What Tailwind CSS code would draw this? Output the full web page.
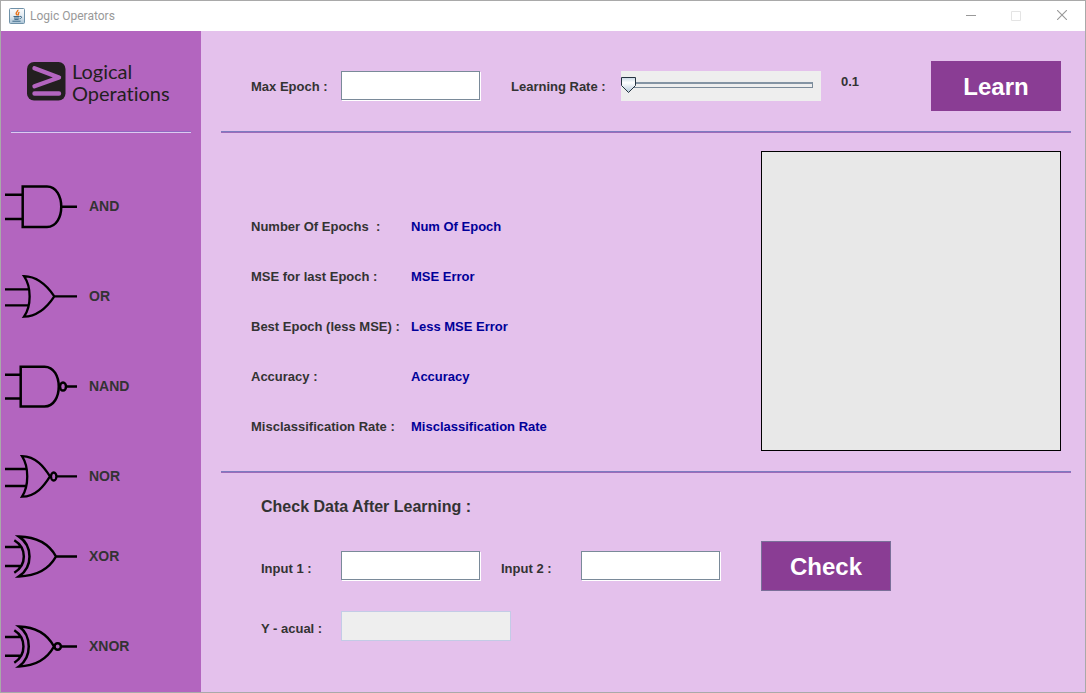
<!DOCTYPE html>
<html lang="en">
<head>
<meta charset="utf-8">
<meta name="viewport" content="width=device-width, initial-scale=1">
<title>Logic Operators</title>
<script src="https://cdn.jsdelivr.net/npm/@tailwindcss/browser@4"></script>
<style>
  .rate::-webkit-slider-thumb {
    appearance: none;
    width: 15px;
    height: 16px;
    background: url("data:image/svg+xml,%3Csvg xmlns='http://www.w3.org/2000/svg' width='15' height='16'%3E%3ClinearGradient id='g' x2='0' y2='1'%3E%3Cstop stop-color='%23c8d8e6'/%3E%3Cstop offset='.35' stop-color='%23fff'/%3E%3Cstop offset='1' stop-color='%23b4c8da'/%3E%3C/linearGradient%3E%3Cpath d='M.5 .5h14v8l-7 7-7-7z' fill='url(%23g)' stroke='%23263440'/%3E%3C/svg%3E");
  }
</style>
</head>
<body>
<div class="min-h-screen flex flex-col border border-[#a9a9a9] bg-[#e4c1ec] font-['Liberation_Sans',Arial,sans-serif] text-[13px] font-bold text-[#333333]">
  <header class="h-[30px] bg-white flex items-center pl-2">
    <svg class="w-4 h-4" viewBox="0 0 16 16" aria-hidden="true">
      <defs><linearGradient id="tile" x2="0" y2="1"><stop stop-color="#fbfcfd"/><stop offset=".5" stop-color="#e3ebf1"/><stop offset="1" stop-color="#a9c3d6"/></linearGradient></defs>
      <rect x=".5" y=".5" width="15" height="15" rx="1" fill="url(#tile)" stroke="#6f91a8"/>
      <path d="M8.800 1.800c.8 1.600-2.700 2.400-1.500 4.200.4.600.9.900.9 1.500M10.400 4.200C8.600 5 9.900 6 9.200 7.300" fill="none" stroke="#e8731c" stroke-width="1.400"/>
      <path d="M4.500 8.500h6.200M5 10h5.200M5.400 11.400h4.200M3.400 13.200h8.200" fill="none" stroke="#3c6787" stroke-width="1"/>
      <path d="M11 8.400c2.400-.4 2 2-.4 2.400" fill="none" stroke="#3c6787"/>
    </svg>
    <h1 class="ml-[5px] font-['Roboto','Open_Sans',sans-serif] font-normal text-xs text-[#999999]">Logic Operators</h1>
    <div class="ml-auto flex text-[#999999]">
      <button type="button" aria-label="Minimize" class="w-11 h-[30px] flex items-center justify-center"><svg class="w-2.5 h-2.5" viewBox="0 0 10 10"><path d="M0 4.500h10" stroke="currentColor"/></svg></button>
      <button type="button" aria-label="Maximize" disabled class="w-[46px] h-[30px] flex items-center justify-center text-[#e4e4e4]"><svg class="w-2.5 h-2.5" viewBox="0 0 10 10"><path d="M.5 .5h9v9h-9z" fill="none" stroke="currentColor"/></svg></button>
      <button type="button" aria-label="Close" class="w-[46px] h-[30px] pb-0.5 flex items-center justify-center"><svg class="w-2.5 h-2.5" viewBox="0 0 10 10"><path d="M0 0l10 10M10 0L0 10" stroke="currentColor" stroke-width="1.100"/></svg></button>
    </div>
  </header>

  <div class="flex flex-1">
    <aside class="w-[200px] shrink-0 bg-[#b365bf]">
      <div class="mx-2.5 h-[102px] pl-4 flex items-center gap-1.5 border-b border-[#dccbf0] shadow-[inset_0_-1px_0_#9068c2] font-['Lato',sans-serif] font-normal text-xl leading-[22px] text-[#231f20] [font-variant-ligatures:none]">
        <svg class="w-[39px] h-[39px] shrink-0" viewBox="0 0 39 39" aria-hidden="true">
          <rect width="38.500" height="38.500" rx="7" fill="#231f20"/>
          <path d="M7.500 6.200L32 15.500 7.500 24.300M7.500 31.500H32" fill="none" stroke="#b365bf" stroke-width="4.400" stroke-linecap="round" stroke-linejoin="round"/>
        </svg>
        <p>Logical<br>Operations</p>
      </div>
      <nav class="pt-[33px] pb-1 text-sm" aria-label="Gates">
        <button type="button" class="w-full h-20 mb-2.5 pl-1 flex items-center gap-3">
          <svg class="w-[72px] h-[46px]" viewBox="0 0 72 46" fill="none" stroke="#000" stroke-width="2.500"><path d="M17.700 3.500H42C61 3.500 61 44 42 44H17.700zM0 11.700H17.700M0 36H17.700M56 23.700H72"/></svg>AND</button>
        <button type="button" class="w-full h-20 mb-2.5 pl-1 flex items-center gap-3">
          <svg class="w-[72px] h-[46px]" viewBox="0 0 72 46" fill="none" stroke="#000" stroke-width="2.300"><path d="M19 3.200C33 3.500 43 14 49.300 23.400C43 33 33 43.400 19 43.700C26.500 33 26.500 14 19 3.200zM0 16.300H24M0 32.300H24M49.300 23.400H72"/></svg>OR</button>
        <button type="button" class="w-full h-20 mb-2.5 pl-1 flex items-center gap-3">
          <svg class="w-[72px] h-[46px]" viewBox="0 0 72 46" fill="none" stroke="#000" stroke-width="2.500"><path d="M15.700 3.700H39.500C58.500 3.700 58.500 43.500 39.500 43.500H15.700zM0 11.700H15.700M0 35.500H15.700M61 23.600H72"/><ellipse cx="58" cy="23.600" rx="3" ry="4"/></svg>NAND</button>
        <button type="button" class="w-full h-20 pl-1 flex items-center gap-3">
          <svg class="w-[72px] h-[46px]" viewBox="0 0 72 46" fill="none" stroke="#000" stroke-width="2.300"><path d="M17 3.200C31 3.500 39 14 45 23.400C39 33 31 43.400 17 43.700C24 33 24 14 17 3.200zM0 16H21.500M0 33H21.500M51.500 23.400H72"/><ellipse cx="48.700" cy="23.500" rx="2.700" ry="4"/></svg>NOR</button>
        <button type="button" class="w-full h-20 mb-2.5 pl-1 flex items-center gap-3">
          <svg class="w-[72px] h-[46px]" viewBox="0 0 72 46" fill="none" stroke="#000" stroke-width="2.500"><path d="M14 3.600C32 4 44 11 51 23.500C44 36 32 43 14 43.400C28 34 28 13 14 3.600zM9.300 7.300C22 15 22 32 9.300 39.700M0 14H15.500M0 33H15.500M51 23.500H72"/></svg>XOR</button>
        <button type="button" class="w-full h-20 pl-1 flex items-center gap-3">
          <svg class="w-[72px] h-[46px]" viewBox="0 0 72 46" fill="none" stroke="#000" stroke-width="2.500"><path d="M14 3.600C31 4 42 11 49 23.500C42 36 31 43 14 43.400C27 34 27 13 14 3.600zM9.300 7.300C21.500 15 21.500 32 9.300 39.700M0 14H15.500M0 32.700H15.500M56 23.500H72"/><circle cx="52.700" cy="23.500" r="3.200"/></svg>XNOR</button>
      </nav>
    </aside>

    <main class="flex-1 pl-5 pr-3.5">
      <section class="h-[100px] pl-[30px] pr-2.5 pt-2.5 flex items-center">
        <label for="epoch" class="w-[90px] pt-0.5">Max Epoch :</label>
        <input id="epoch" type="text" class="w-[139px] h-[29px] mb-px px-1 bg-white border border-[#7a8a99] shadow-[1px_1px_0_#fff] outline-none">
        <label for="rate" class="ml-[31px] w-[110px] pt-0.5">Learning Rate :</label>
        <div class="relative w-[200px] h-[30px] pb-0.5 flex items-center bg-[#eeeeee]">
          <div class="absolute inset-x-2 h-1.5 border border-[#7a8a99] border-t-2 border-t-[#8494a4]"></div>
          <input id="rate" type="range" min="0.1" max="1" step="0.1" value="0.1" class="rate relative w-full h-4 appearance-none bg-transparent outline-none">
        </div>
        <output for="rate" class="ml-5 pb-2">0.1</output>
        <button type="button" class="ml-auto w-[130px] h-[50px] pt-0.5 bg-[#8a3d94] text-white text-2xl">Learn</button>
      </section>
      <hr class="h-0.5 border-t border-b border-t-[#7d7cc0] border-b-[#9c6cb9]">

      <section class="pl-[30px] pr-2.5 pt-[18px] pb-[19px] flex items-start justify-between">
        <dl class="pt-[51px] grid grid-cols-[160px_auto] auto-rows-[50px] items-center">
          <dt class="whitespace-pre">Number Of Epochs  :</dt><dd class="text-[#000099]">Num Of Epoch</dd>
          <dt>MSE for last Epoch :</dt><dd class="text-[#000099]">MSE Error</dd>
          <dt>Best Epoch (less MSE) :</dt><dd class="text-[#000099]">Less MSE Error</dd>
          <dt>Accuracy :</dt><dd class="text-[#000099]">Accuracy</dd>
          <dt>Misclassification Rate :</dt><dd class="text-[#000099]">Misclassification Rate</dd>
        </dl>
        <div class="w-[300px] h-[300px] border border-black bg-[#e8e8e8]"></div>
      </section>
      <hr class="h-0.5 border-t border-b border-t-[#7d7cc0] border-b-[#9c6cb9]">

      <section class="pl-10 pt-[22px]">
        <h2 class="text-base leading-6">Check Data After Learning :</h2>
        <form class="pt-[22px]">
          <div class="h-[50px] flex items-center">
            <label for="in1" class="w-20 pt-1.5">Input 1 :</label>
            <input id="in1" type="text" class="w-[139px] h-[29px] mb-px px-1 bg-white border border-[#7a8a99] shadow-[1px_1px_0_#fff] outline-none">
            <label for="in2" class="ml-[21px] w-20 pt-1.5">Input 2 :</label>
            <input id="in2" type="text" class="w-[139px] h-[29px] mb-px px-1 bg-white border border-[#7a8a99] shadow-[1px_1px_0_#fff] outline-none">
            <button type="button" class="ml-[41px] w-[130px] h-[50px] pt-0.5 bg-[#8a3d94] border border-[#7a6f99] text-white text-2xl">Check</button>
          </div>
          <div class="pt-5 flex items-center">
            <label for="out" class="w-20 pt-1.5">Y - acual :</label>
            <input id="out" type="text" readonly class="w-[170px] h-[30px] px-1 bg-[#eeeeee] border border-[#c3cbe6] outline-none">
          </div>
        </form>
      </section>
    </main>
  </div>
</div>
</body>
</html>
